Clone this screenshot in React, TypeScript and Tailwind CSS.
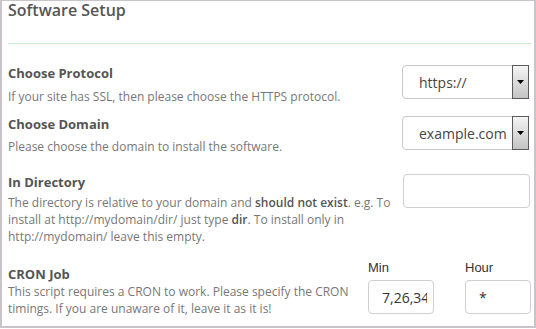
import React from 'react';

const SelectBox = ({ value }: { value: string }) => (
  <div className="flex h-[34px] w-[127px] shrink-0 items-stretch rounded-[4px] border border-[#c8c8c8] bg-white">
    <div className="flex flex-1 items-center overflow-hidden whitespace-nowrap pl-[16px] text-[14px] text-[#454545]">
      {value}
    </div>
    <div className="my-[-1px] mr-[-1px] flex w-[17px] items-center justify-center border border-[#5a5a5a] bg-gradient-to-b from-[#f4f4f4] via-[#dcdcdc] to-[#c4c4c4]">
      <svg width="7" height="4" viewBox="0 0 7 4">
        <path d="M0 0h7L3.5 4z" fill="#000" />
      </svg>
    </div>
  </div>
);

const TextBox = ({ value, w }: { value?: string; w: string }) => (
  <div className={`flex h-[34px] ${w} shrink-0 items-center rounded-[4px] border border-[#cfcfcf] bg-white pl-[13px] pr-[6px] text-[14px] text-[#333]`}>
    <div className="overflow-hidden whitespace-nowrap">{value}</div>
  </div>
);

const App = () => {
  return (
    <div
      className="h-[329px] w-[536px] overflow-hidden bg-white"
      style={{ fontFamily: '"Open Sans", "Noto Sans", sans-serif' }}
    >
      <div className="h-[328px] overflow-hidden border-x-2 border-b-2 border-t border-[#c9c4c9] pl-[6px] pr-[3px]">
        {/* header */}
        <div className="border-b border-[#cdeccd] pb-[24px]">
          <h1 className="text-[16px] font-semibold leading-[18px] text-[#555]">Software Setup</h1>
        </div>

        {/* protocol */}
        <div className="mt-[21px] flex">
          <div className="flex-1">
            <div className="text-[13px] font-bold leading-[16px] text-[#555]">Choose Protocol</div>
            <div className="mt-[8px] text-[12px] leading-[16px] text-[#777]">
              If your site has SSL, then please choose the HTTPS protocol.
            </div>
          </div>
          <div className="mr-[2px]">
            <SelectBox value="https://" />
          </div>
        </div>

        {/* domain */}
        <div className="mt-[11px] flex">
          <div className="flex-1">
            <div className="text-[13px] font-bold leading-[16px] text-[#555]">Choose Domain</div>
            <div className="mt-[7px] text-[12px] leading-[16px] text-[#777]">
              Please choose the domain to install the software.
            </div>
          </div>
          <div className="mr-[2px]">
            <SelectBox value="example.com" />
          </div>
        </div>

        {/* directory */}
        <div className="mt-[19px] flex">
          <div className="w-[388px]">
            <div className="text-[13px] font-bold leading-[16px] text-[#555]">In Directory</div>
            <div className="mt-[4px] text-[12px] leading-[17px] text-[#777]">
              The directory is relative to your domain and <b className="font-semibold text-[#555]">should not exist</b>. e.g. To
              install at http://mydomain/dir/ just type <b className="font-semibold text-[#555]">dir</b>. To install only in
              http://mydomain/ leave this empty.
            </div>
          </div>
          <div className="ml-auto mr-[1px]">
            <TextBox w="w-[127px]" />
          </div>
        </div>

        {/* cron */}
        <div className="mt-[14px] flex">
          <div className="w-[350px] shrink-0 pt-[7px]">
            <div className="text-[13px] font-bold leading-[16px] text-[#555]">CRON Job</div>
            <div className="mt-[1px] text-[12px] leading-[17px] text-[#777]">
              This script requires a CRON to work. Please specify the CRON timings. If you are unaware of it, leave it as it is!
            </div>
          </div>
          <div className="ml-[10px] flex gap-[31px]">
            <div className="w-[66px]">
              <div className="mb-[4px] text-[13px] leading-[17px] text-[#333]" style={{ fontFamily: '"Liberation Sans", Arial, sans-serif' }}>Min</div>
              <TextBox w="w-[66px]" value="7,26,34" />
            </div>
            <div className="w-[66px]">
              <div className="mb-[4px] text-[13px] leading-[17px] text-[#333]" style={{ fontFamily: '"Liberation Sans", Arial, sans-serif' }}>Hour</div>
              <TextBox w="w-[66px]" value="*" />
            </div>
          </div>
        </div>
      </div>
    </div>
  );
};

export default App;
